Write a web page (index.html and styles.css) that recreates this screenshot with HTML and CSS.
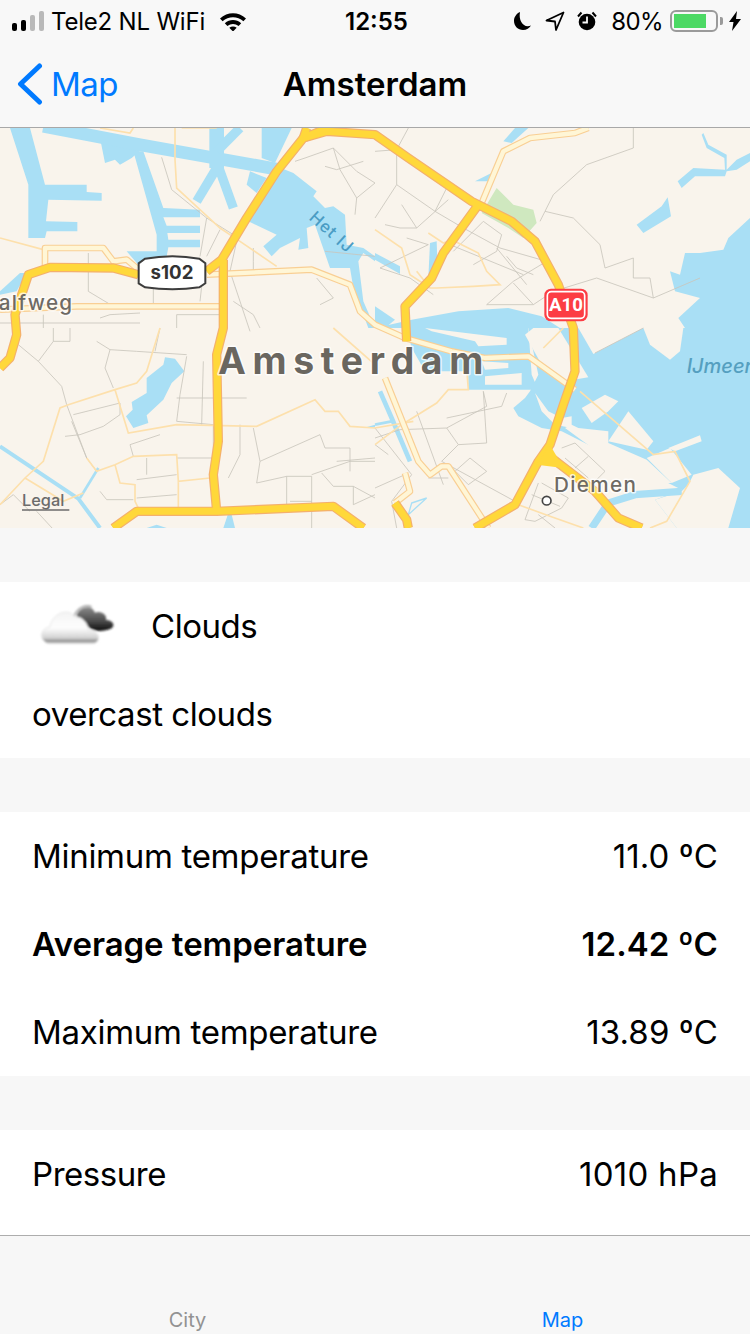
FILE: index.html
```html
<!doctype html>
<html>
<head>
  <title>Amsterdam</title>
  <link rel="stylesheet" href="styles.css">
</head>
<body>
  <div class="statusbar">
    <div class="status-left">
      <span class="signal"><i class="on b1"></i><i class="on b2"></i><i class="b3"></i><i class="b4"></i></span>
      <span class="carrier">Tele2 NL WiFi</span>
      <svg class="wifi" width="28" height="20" viewBox="0 0 28 20">
        <path d="M1 7.500C8.500 .5 19.500 .5 27 7.500l-2.600 2.800C18.500 5 9.500 5 3.600 10.300z"/>
        <path d="M5.800 12.300c4.800-4.300 11.600-4.300 16.400 0l-2.600 2.700c-3.400-2.800-7.800-2.800-11.200 0z"/>
        <path d="M10.300 16.800c2.300-1.700 5.100-1.700 7.400 0L14 20.500z"/>
      </svg>
    </div>
    <div class="clock">12:55</div>
    <div class="status-right">
      <svg class="ico-moon" width="19" height="20" viewBox="0 0 19 20"><path d="M7 1C2.500 3 1 7 1 10c0 5 4 9 9 9 3.500 0 6.500-1.800 8-4.500-1 .5-2.200.7-3.300.7C9.500 15.200 5.500 9 7 1z"/></svg>
      <svg class="ico-loc" width="20" height="20" viewBox="0 0 20 20"><path d="M18.500 1.500L1.500 9.500l8.500 1 1 8.500z" fill="none" stroke="#000" stroke-width="1.800" stroke-linejoin="round"/></svg>
      <svg class="ico-alarm" width="20" height="20" viewBox="0 0 20 20">
        <circle cx="10" cy="11" r="8.300"/>
        <path d="M1 5.500L4.500 1.500M19 5.500L15.500 1.500" stroke="#000" stroke-width="2" fill="none"/>
        <path d="M10 5.500V11.500H5.500" stroke="#f8f8f8" stroke-width="1.800" fill="none"/>
      </svg>
      <span class="percent">80%</span>
      <span class="battery"><span class="battery-fill"></span></span>
      <span class="battery-tip"></span>
      <svg class="ico-bolt" width="12" height="20" viewBox="0 0 12 20"><path d="M8 0L0 11h4.500L3 20l9-12H7z"/></svg>
    </div>
  </div>

  <div class="navbar">
    <div class="back">
      <svg width="26" height="42" viewBox="0 0 26 42"><path d="M22.500 3L3.500 21l19 18" fill="none" stroke="#007aff" stroke-width="5" stroke-linecap="round" stroke-linejoin="round"/></svg>
      <span>Map</span>
    </div>
    <div class="title">Amsterdam</div>
  </div>

  <div class="map">
    <svg width="750" height="400" viewBox="0 0 2250 1200">
      <rect width="2250" height="1200" class="land"/>

      <!-- water -->
      <g class="water">
        <path d="M30 0L90 0 135 170 260 170 260 192 305 195 305 218 145 215 138 280 232 282 232 310 140 310 135 330 85 330 85 170z"/>
        <path d="M300 30L430 60 395 90 360 110 345 95 315 105z"/>
        <path d="M400 70L430 70 490 240 600 245 600 268 490 268 500 293 600 293 600 315 502 315 505 335 600 335 600 358 505 358 500 385 440 395 415 410 380 370 470 370 470 320z"/>
        <path d="M785 0L875 0 825 105 785 90z"/>
        <path d="M750 130L800 150 770 195 740 170z"/>
        <path d="M830 115L880 135 950 190 940 205 975 240 1000 235 1035 260 1040 350 1090 360 1125 385 1125 400 1090 375 1075 400 1090 520 1125 600 1105 600 1060 480 1050 420 990 420 945 290 920 300 925 360 895 365 900 330 840 360 815 385 790 355 830 320 745 280 790 180z"/>
        <path d="M0 490L60 435 80 435 50 490 0 500z"/>
      </g>
      <g class="canal">
        <path d="M130 -5L420 50 840 125" stroke-width="38"/>
        <path d="M650 120L590 220" stroke-width="28"/>
        <path d="M655 115L700 240" stroke-width="28"/>
        <path d="M650 0L650 120" stroke-width="44"/>
        <path d="M650 70L720 0" stroke-width="28"/>
        <path d="M0 955L235 1112 300 1200" stroke-width="12"/>
        <path d="M240 1110L295 1020" stroke-width="8"/>
      </g>
      <g class="water" transform="translate(1125 0)">
        <path d="M385 40L420 0 460 0 410 45z"/>
        <path d="M300 160L360 130 340 160z"/>
        <path d="M985 15L1000 50 1055 80 1055 125 1085 95 1125 75 1125 100 1085 125 1055 130 1050 145 960 145 920 180 908 160 955 120 1050 125 1048 90 995 60 980 20z"/>
        <path d="M785 290L860 235 878 208 888 265 805 315z"/>
        <path d="M1125 270L1060 330 1045 365 975 375 930 375 915 440 885 430 900 490 975 510 910 570 930 600 1125 600z"/>
        <path d="M165 345L185 340 187 400 175 450 160 450z"/>
        <path d="M0 375L75 415 75 438 0 395z"/>
        <path d="M0 600L110 575 250 550 400 540 500 565 555 600z"/>
        <path d="M0 535L60 575 30 600 0 600z" />
      </g>
      <g class="water" transform="translate(0 600)">
        <path d="M495 88L525 92 553 130 515 165 490 215 440 262 445 285 400 300 378 265 398 245 395 222 440 195 440 150 490 110z"/>
        <path d="M440 600L470 590 500 600zM670 600L690 540 705 600z"/>
        <path d="M1125 290L1090 300 1125 298z"/>
      </g>
      <g transform="translate(1125 600)">
        <g class="water">
          <path d="M95 0L460 0 470 140 490 185 280 185 280 130 150 130 110 60z"/>
          <path d="M460 0L1125 0 1125 600 905 600 840 515 920 485 830 440 700 370 640 350 560 310 500 300 430 265 415 240 450 210 465 190 490 140z"/>
        </g>
        <g class="land">
          <path d="M150 0L395 30 395 50 310 55 300 40 170 10z"/>
          <path d="M320 100L400 105 400 120 330 125z"/>
          <path d="M330 170L440 170 440 135 330 145z"/>
          <path d="M450 20L475 0 550 0 640 148 570 160 500 110z"/>
          <path d="M610 0L655 78 805 0z"/>
          <path d="M805 0L825 50 885 95 915 70 925 0z"/>
          <path d="M955 440L1030 420 1095 480 1060 600 905 600 840 515 920 490 940 470z"/>
          <path d="M815 390L885 360 950 440 890 465z"/>
          <path d="M700 340L760 250 835 340 815 365z"/>
          <path d="M620 240L690 200 730 220 700 250 650 285z"/>
          <path d="M590 290L610 300 700 310 700 345 815 395 890 465 830 465 700 395 570 300z"/>
          <path d="M880 360L975 322 980 340 900 370z"/>
          <path d="M480 195L520 250 560 270 590 265 590 300 540 290 500 250z"/>
        </g>
        <g class="canal">
          <path d="M15 190L50 270 105 400" stroke-width="14"/>
          <path d="M60 530L95 570 100 600" stroke-width="14"/>
          <path d="M110 525L155 510 100 560z" stroke-width="4"/>
          <path d="M650 600L700 525 780 500 920 490" stroke-width="22"/>
          <path d="M0 290L50 280" stroke-width="8"/>
        </g>
      </g>

      <!-- park -->
      <path class="park" transform="translate(1125 0)" d="M365 180L415 230 475 245 485 285 445 330 400 300 320 255z"/>

      <!-- streets -->
      <g class="street">
        <path d="M485 88L515 185 620 270 700 320M620 270L600 385M660 305L620 385M265 375V490L340 535M460 480V535M600 520L610 430M710 340L690 430 750 610M760 360V400L760 440M950 450L1000 510 960 530M975 370L1125 385"/>
        <path d="M0 585H420M530 560L660 560M130 560V600M300 570L330 560 420 555M530 560V600M700 520L760 560 780 600"/>
        <path d="M885 100L915 90 1000 60 1070 130 1125 165M975 115L1010 125 1090 100M1000 60L1020 125 1070 210 1125 165M1070 210L1065 260"/>
        <path d="M1125 70L1190 65 1190 170 1305 250 1390 300 1500 360 1640 400 1540 460 1460 530 1600 530 1660 490 1790 450 1960 510 2100 450M1190 170L1125 270M1190 65L1225 0M1305 250L1345 170M1205 230L1250 300 1200 300 1155 290M1250 300L1345 215M1220 330L1285 350 1140 420 1230 450 1300 500M1360 370L1450 280 1505 320 1490 370 1420 410M1350 350L1570 440M1520 385L1550 420 1600 440M1600 530L1540 465M1490 360L1580 470"/>
        <path d="M1900 0V60L1760 110 1660 200 1635 250 1720 270 1800 350 1815 420 1900 390 1900 450 1950 450 1960 510M1635 250L1620 280"/>
        <path d="M55 650L115 700 160 640V600M115 700L185 775 200 830 260 990 290 1030M160 640H210V600M290 640L330 665 315 720 340 780M330 665L410 670 560 680M480 600L465 670M560 685L540 800 530 880M610 700L605 890M530 810H740M530 880L640 890M640 890V990H530M720 890V980M760 900L780 1000 770 1065M720 980L685 1050M780 1000L960 920M960 920L975 960H1050V1030"/>
        <path d="M400 985L390 950 480 920M215 880L260 990M220 860L360 825 360 860 310 895 240 920 195 925M440 990V1040M410 1055L530 1040M410 1110L530 1100M300 1090L320 1115H400M110 1150L170 1215M0 1130L40 1100 90 1150M770 1065L860 1045V1150M860 1045H935V1200M935 1040L1050 1000 1125 1000M1010 1000L1125 990M965 1035L1000 1075H1060V1130L1125 1100M1060 1075L1125 1110M870 1120H935"/>
        <path d="M1125 900L1235 1040 1175 1120M1175 1120L1190 1200"/>
        <g transform="translate(1125 600)">
          <path d="M0 330L75 305 215 300 335 235 325 190M125 250L205 470M215 300L250 350 200 400 420 520M250 350L335 345 325 190M285 390L240 430 280 470 335 430M285 390L335 430M0 480L90 440M160 450H220M0 350L40 380M395 195L380 235 215 270"/>
          <path d="M490 465L450 575 480 580 560 540 580 510 500 465M470 500L555 535M490 560L540 600M560 360L600 345 690 430 650 470M570 390L640 450M600 420L640 385"/>
          <path d="M805 0L660 75"/>
        </g>
      </g>

      <!-- small roads -->
      <g class="thin">
        <path d="M0 330L130 365M300 0L390 15 400 0M525 0L525 95 530 180 660 300 720 340 830 415"/>
        <path d="M0 1130L75 1050 130 1000 180 840 205 830 345 785 410 765 440 730 480 600M345 785L385 915 530 890 770 895 945 815 975 850 1015 850 1050 895 1125 900 1240 880M1000 600L1125 710M75 1050L190 1120 250 1095M260 990L290 1030 345 1010 400 985 530 980 535 1060 630 1050M345 1010L360 1065 405 1070 405 1120 420 1150M535 1060L535 1140"/>
        <path d="M1125 305L1205 360 1230 440 1290 480 1310 480M1310 480L1420 475 1500 470 1460 430 1435 375 1355 335 1330 345 1285 315M1290 480L1250 430M545 0H650"/>
        <path d="M1125 950L1205 890 1310 825 1345 785 1405 785 1400 720M1630 660L1690 600"/>
        <path d="M1555 1130L1650 1165 1750 1200M1740 790L1960 980 2025 970 2070 1060 2000 1180 1950 1200"/>
      </g>

      <!-- roads, pale -->
      <g>
        <g class="pale-case">
          <path id="p1" d="M620 440L935 425 1050 470 1080 550 1125 590 1215 630 1355 670 1455 690 1585 685 1725 785"/>
          <path id="p2" d="M0 545L230 535 670 535"/>
          <path id="p3" d="M135 420V360H310L340 400 380 395 410 420"/>
          <path id="p4" d="M1445 225L1510 70 1590 30 1725 15 1765 0"/>
          <path id="p5" d="M1155 750L1255 1000 1290 1040 1325 1015 1345 1015 1465 1200"/>
          <path id="p6" d="M1215 1035L1230 1090 1185 1125"/>
        </g>
        <g class="pale-fill">
          <use href="#p1"/><use href="#p2"/><use href="#p3"/><use href="#p4"/><use href="#p5"/><use href="#p6"/>
        </g>
      </g>

      <!-- highways -->
      <g>
        <g class="major-case">
          <path id="h1" d="M0 720L30 690 50 620 45 560 85 440 150 418 340 420 415 440M620 430L665 395 740 270 830 130 910 30 980 10 1125 20 1225 90 1415 220 1535 280 1605 340 1675 470 1720 600 1725 730 1690 830 1650 950 1615 1000 1545 1130 1425 1200"/>
          <path id="h2" d="M1435 230L1330 375 1295 450 1215 535 1220 640"/>
          <path id="h3" d="M670 395V600L650 680 655 940 640 1040 650 1150"/>
          <path id="h4" d="M340 1200L410 1150 650 1150 1000 1135 1090 1200"/>
          <path id="h5" d="M1655 990L1785 1090 1855 1170 1925 1200"/>
          <path id="h6" d="M1185 1125L1220 1175 1225 1200"/>
          <path id="h7" d="M920 0L910 30 985 0"/>
        </g>
        <g class="major-fill">
          <use href="#h1"/><use href="#h2"/><use href="#h3"/><use href="#h4"/><use href="#h5"/><use href="#h6"/><use href="#h7"/>
        </g>
        <path class="junction" d="M1650 950L1610 1010 1690 1020z"/>
      </g>

      <!-- map labels -->
      <text class="lbl lbl-city" x="654" y="737">Amsterdam</text>
      <text class="lbl lbl-town" x="-4" y="545">alfweg</text>
      <text class="lbl lbl-town" x="1662" y="1092">Diemen</text>
      <text class="lbl lbl-water" transform="translate(925 272) rotate(42)">Het IJ</text>
      <text class="lbl lbl-sea" x="2060" y="735">IJmeer</text>
      <circle cx="1640" cy="1118" r="13" fill="#fff" stroke="#444" stroke-width="5"/>

      <text class="legal" x="66" y="1135">Legal</text>
      <path d="M66 1146H208" stroke="#6b6b6b" stroke-width="5"/>

      <!-- shields -->
      <path d="M435 392C490 382 545 382 598 392L616 406V466L598 478C545 486 490 486 435 478L416 466V406z" fill="#fff" stroke="#3d3d3d" stroke-width="6"/>
      <text class="shield-s" x="516" y="454">s102</text>
      <rect x="1633" y="482" width="130" height="98" rx="20" fill="#fc3d44"/>
      <rect x="1642" y="491" width="112" height="80" rx="12" fill="none" stroke="#fff" stroke-width="5"/>
      <text class="shield-a" x="1698" y="550">A10</text>
    </svg>
  </div>

  <div class="group clouds-group">
    <div class="row">
      <svg class="weather-icon" width="120" height="70" viewBox="0 0 360 210">
        <defs>
          <linearGradient id="white-cloud" x1="0" y1="0" x2="0" y2="1">
            <stop offset="0" stop-color="#f4f4f4"/>
            <stop offset=".5" stop-color="#fdfdfd"/>
            <stop offset=".82" stop-color="#d2d2d2"/>
            <stop offset=".92" stop-color="#8e8e8e"/>
            <stop offset="1" stop-color="#d8d8d8"/>
          </linearGradient>
          <linearGradient id="dark-cloud" x1="0" y1="0" x2="0" y2="1">
            <stop offset="0" stop-color="#8a8a8a"/>
            <stop offset=".6" stop-color="#4a4a4a"/>
            <stop offset="1" stop-color="#0c0c0c"/>
          </linearGradient>
          <filter id="soft"><feGaussianBlur stdDeviation="2.500"/></filter>
        </defs>
        <g filter="url(#soft)">
          <path d="M170 70C178 45 215 35 225 62 245 55 262 70 258 84 280 84 290 104 268 112 240 120 222 118 205 105 190 95 172 90 170 70z" fill="url(#dark-cloud)"/>
          <path d="M160 80C168 50 195 35 215 45" fill="none" stroke="#aaa" stroke-width="5"/>
          <path d="M85 155C55 145 60 108 90 105 95 65 145 45 165 75 185 72 205 95 205 115 240 115 245 150 220 155z" fill="url(#white-cloud)" stroke="#e6e6e6" stroke-width="3"/>
        </g>
      </svg>
      <span class="clouds-label">Clouds</span>
    </div>
    <div class="row row-tight">overcast clouds</div>
  </div>

  <div class="group">
    <div class="row"><span>Minimum temperature</span><span class="val">11.0 ºC</span></div>
    <div class="row row-strong"><span>Average temperature</span><span class="val">12.42 ºC</span></div>
    <div class="row"><span>Maximum temperature</span><span class="val">13.89 ºC</span></div>
  </div>

  <div class="group group-last">
    <div class="row row-tight"><span>Pressure</span><span class="val">1010 hPa</span></div>
  </div>

  <div class="tabbar">
    <div class="tab">City</div>
    <div class="tab tab-active">Map</div>
  </div>
</body>
</html>
```

FILE: styles.css
```css
html, body {
  margin: 0;
  padding: 0;
}

body {
  width: 750px;
  height: 1334px;
  overflow: hidden;
  background: #f7f7f7;
  font-family: Inter, "Liberation Sans", sans-serif;
  color: #000;
}

/* status bar */
.statusbar {
  height: 40px;
  background: #f8f8f8;
  display: flex;
  align-items: center;
  justify-content: space-between;
  padding: 2px 9px 0 12px;
  box-sizing: border-box;
  position: relative;
  font-size: 24px;
  letter-spacing: -0.2px;
}
.status-left, .status-right {
  display: flex;
  align-items: center;
}
.signal {
  display: flex;
  align-items: flex-end;
  gap: 4px;
  height: 20px;
  margin-right: 7px;
}
.signal i {
  width: 5px;
  border-radius: 2px;
  background: #b9b9b9;
}
.signal .on { background: #000; }
.signal .b1 { height: 8px; }
.signal .b2 { height: 11px; }
.signal .b3 { height: 16px; }
.signal .b4 { height: 20px; }
.carrier { margin-right: 14px; }
.clock {
  position: absolute;
  left: 345px;
  top: 7px;
  font-weight: 600;
  letter-spacing: 0;
}
.ico-moon { margin-right: 13px; }
.ico-loc { margin-right: 12px; }
.ico-alarm { margin-right: 14px; }
.percent {
  margin-right: 7px;
  letter-spacing: -0.6px;
}
.battery {
  width: 48px;
  height: 22px;
  border: 2px solid #9a9a9a;
  border-radius: 6px;
  box-sizing: border-box;
  padding: 2px;
  display: block;
}
.battery-fill {
  display: block;
  width: 32px;
  height: 14px;
  background: #4cd964;
}
.battery-tip {
  width: 3px;
  height: 8px;
  background: #9a9a9a;
  margin: 0 6px 0 2px;
  border-radius: 0 2px 2px 0;
}

/* nav bar */
.navbar {
  height: 88px;
  background: #f8f8f8;
  border-bottom: 1px solid #a8a8a8;
  box-sizing: border-box;
  position: relative;
  display: flex;
  align-items: center;
  justify-content: center;
}
.back {
  position: absolute;
  left: 17px;
  top: 23px;
  display: flex;
  align-items: center;
  gap: 8px;
  color: #007aff;
  font-size: 33px;
  letter-spacing: -0.6px;
}
.title {
  font-size: 33px;
  font-weight: 600;
  letter-spacing: 0;
}

/* map */
.map {
  height: 400px;
  line-height: 0;
}
.land { fill: #f9f4ec; }
.water { fill: #a9dff5; }
.canal { fill: none; stroke: #a9dff5; }
.park { fill: #cfe8bf; }
.street {
  fill: none;
  stroke: #c9c5bc;
  stroke-width: 2.500;
}
.thin {
  fill: none;
  stroke: #fde0ac;
  stroke-width: 5;
}
.pale-case {
  fill: none;
  stroke: #f9cf94;
  stroke-width: 20;
  stroke-linejoin: round;
}
.pale-fill {
  fill: none;
  stroke: #fff6d6;
  stroke-width: 13;
  stroke-linejoin: round;
}
.major-case {
  fill: none;
  stroke: #f4b06c;
  stroke-width: 28;
  stroke-linejoin: round;
}
.major-fill {
  fill: none;
  stroke: #ffd83a;
  stroke-width: 21;
  stroke-linejoin: round;
}
.junction { fill: #ffd83a; }
.lbl {
  paint-order: stroke;
  stroke: rgba(255, 255, 255, 0.75);
  stroke-width: 9;
  stroke-linejoin: round;
}
.lbl-city {
  font-size: 112px;
  font-weight: 700;
  letter-spacing: 20px;
  fill: #6a665f;
}
.lbl-town {
  font-size: 62px;
  font-weight: 500;
  letter-spacing: 4px;
  fill: #6e6a64;
}
.lbl-water {
  font-size: 50px;
  font-weight: 500;
  letter-spacing: 3px;
  fill: #4a9cc4;
  stroke: none;
}
.lbl-sea {
  font-size: 60px;
  font-weight: 500;
  font-style: italic;
  fill: #559fc0;
  stroke: none;
}
.legal {
  font-size: 49px;
  font-weight: 500;
  fill: #6b6b6b;
}
.shield-s {
  font-size: 56px;
  font-weight: 700;
  text-anchor: middle;
  fill: #333;
}
.shield-a {
  font-family: "Roboto", sans-serif;
  font-size: 56px;
  font-weight: 700;
  text-anchor: middle;
  fill: #fff;
}

/* list groups */
.group {
  background: #fff;
  margin-top: 54px;
}
.group-last {
  height: 105px;
}
.row {
  height: 88px;
  padding: 0 32px 0 32px;
  display: flex;
  align-items: center;
  justify-content: space-between;
  font-size: 33px;
  letter-spacing: -0.3px;
}
.row-tight { letter-spacing: -0.45px; }
.row-strong { font-weight: 600; letter-spacing: -0.05px; }
.val { letter-spacing: 0.1px; }
.row-tight .val { letter-spacing: 0.25px; }
.clouds-group .row:first-child {
  justify-content: flex-start;
  padding-left: 20px;
  letter-spacing: -0.45px;
}
.weather-icon { flex: none; margin-top: 2px; }
.clouds-label { margin-left: 11px; }

/* tab bar */
.tabbar {
  height: 99px;
  background: #f7f7f7;
  border-top: 1px solid #adadad;
  box-sizing: border-box;
  display: flex;
}
.tab {
  flex: 1;
  text-align: center;
  font-size: 20px;
  color: #929292;
  padding-top: 72px;
}
.tab-active { color: #007aff; }
```
